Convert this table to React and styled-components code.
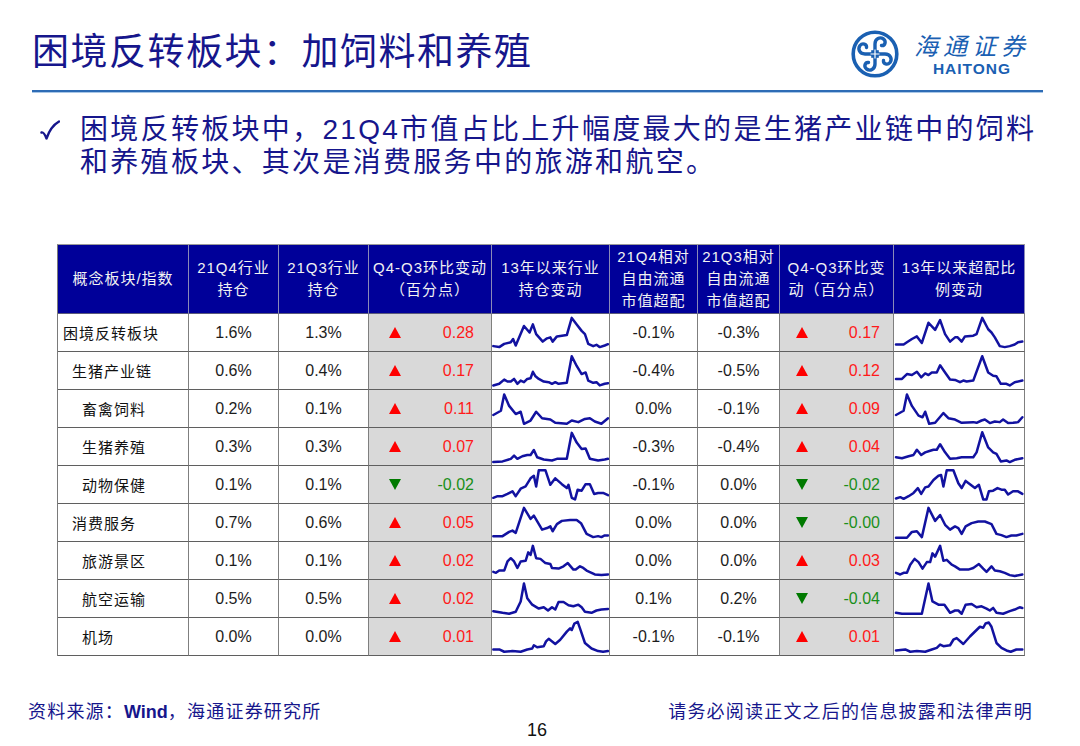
import React from 'react';
import styled, { createGlobalStyle } from 'styled-components';

const FONT = `"Liberation Sans", "Noto Sans CJK SC", sans-serif`;
const NAVY = '#16168c';
const LOGO_BLUE = '#1a60b2';

const GlobalStyle = createGlobalStyle`
  html, body { margin: 0; padding: 0; background: #fff; }
  body { font-family: ${FONT}; }
`;

const Page = styled.div`
  width: 1080px;
  height: 746px;
  overflow: hidden;
  display: flex;
  flex-direction: column;
  background: #fff;
`;

const TitleBar = styled.header`
  height: 90px;
  box-sizing: border-box;
  display: flex;
  justify-content: space-between;
  align-items: flex-start;
  padding: 0 50px 0 32px;
`;

const Title = styled.h1`
  margin: 31px 0 0;
  font-family: ${FONT};
  font-weight: 400;
  font-size: 37px;
  line-height: 44px;
  letter-spacing: 1.5px;
  color: ${NAVY};
  white-space: nowrap;
`;

const Logo = styled.div`
  margin-top: 30px;
  display: flex;
  align-items: flex-start;
  gap: 15px;
`;

const LogoMark = styled.svg`
  width: 48px;
  height: 48px;
  display: block;
`;

const LogoText = styled.div`
  display: flex;
  flex-direction: column;
  align-items: center;
  color: ${LOGO_BLUE};
`;

const LogoCn = styled.span`
  font-family: "Noto Sans CJK SC", sans-serif;
  font-size: 24px;
  line-height: 24px;
  letter-spacing: 5px;
  font-style: italic;
  margin-top: 3px;
`;

const LogoEn = styled.span`
  font-family: "Liberation Sans", sans-serif;
  font-weight: 700;
  font-size: 15.5px;
  line-height: 14px;
  letter-spacing: 1px;
  margin-top: 5px;
`;

const Rule = styled.div`
  margin: 0 37px 0 32px;
  height: 2px;
  background: #2e6cb5;
  box-shadow: 0 1px 0 #a9c7e7;
`;

const Bullet = styled.section`
  margin-top: 21px;
  padding-left: 40px;
  display: flex;
  gap: 20px;
  align-items: flex-start;
`;

const Check = styled.svg`
  width: 20px;
  height: 22px;
  margin-top: 7px;
  flex: none;
`;

const BulletText = styled.p`
  margin: 0;
  font-family: ${FONT};
  font-size: 28px;
  line-height: 33px;
  letter-spacing: 2.3px;
  color: ${NAVY};
`;

const Line = styled.span`
  display: block;
  white-space: nowrap;
`;

const Table = styled.div`
  margin: 65px 0 0 57px;
  width: 968px;
  box-sizing: border-box;
  display: grid;
  grid-template-columns: 131px 90px 90px 123px 118px 88px 82px 114px 131px;
  grid-template-rows: 69px repeat(9, 38px);
  border-top: 1px solid #9a9a9a;
  border-left: 1px solid #7a7a7a;
`;

const HeadCell = styled.div`
  box-sizing: border-box;
  background: #000099;
  color: #f2f2f2;
  border-right: 1px solid #8a8ab8;
  border-bottom: 1px solid #5a5a7a;
  display: flex;
  align-items: center;
  justify-content: center;
  text-align: center;
  white-space: pre-line;
  font-family: ${FONT};
  font-size: 15px;
  line-height: 22px;
  letter-spacing: 1px;
`;

const Cell = styled.div`
  box-sizing: border-box;
  border-right: 1px solid #7f7f7f;
  border-bottom: 1px solid #5f5f5f;
  background: ${(p) => (p.$shade ? '#d9d9d9' : '#fff')};
  display: flex;
  align-items: center;
  justify-content: center;
  font-family: ${FONT};
  font-size: 16px;
  color: #1c1c1c;
  white-space: nowrap;
`;

const LabelCell = styled(Cell)`
  justify-content: flex-start;
  padding-left: ${(p) => [5, 14, 24][p.$level]}px;
  font-size: 15px;
  letter-spacing: 1px;
  color: #111;
`;

const ChangeCell = styled(Cell)`
  justify-content: space-between;
  padding: 0 ${(p) => p.$pr}px 0 ${(p) => p.$pl}px;
  color: ${(p) => (p.$up ? '#ff1a1a' : '#1a8f1a')};
`;

const Tri = styled.span`
  width: 0;
  height: 0;
  border-left: 6px solid transparent;
  border-right: 6px solid transparent;
  ${(p) =>
    p.$up
      ? 'border-bottom: 11px solid #ff0000;'
      : 'border-top: 11px solid #007a00;'}
`;

const SparkCell = styled(Cell)`
  align-items: stretch;
  justify-content: stretch;
`;

const Spark = styled.svg`
  width: 100%;
  height: 100%;
  display: block;
`;

const Footer = styled.footer`
  margin-top: 44px;
  padding: 0 47px 0 28px;
  display: flex;
  justify-content: space-between;
  font-family: ${FONT};
  font-size: 18px;
  line-height: 24px;
  letter-spacing: 1.2px;
  color: ${NAVY};
`;

const FooterNote = styled.span`
  white-space: nowrap;
`;

const Strong = styled.b`
  font-weight: 700;
  letter-spacing: 0;
`;

const PageNumber = styled.div`
  margin-top: -4px;
  padding-right: 6px;
  text-align: center;
  font-family: "Liberation Sans", sans-serif;
  font-size: 18px;
  line-height: 20px;
  color: #111;
`;

const headers = [
  '概念板块/指数',
  '21Q4行业\n持仓',
  '21Q3行业\n持仓',
  'Q4-Q3环比变动\n（百分点）',
  '13年以来行业\n持仓变动',
  '21Q4相对\n自由流通\n市值超配',
  '21Q3相对\n自由流通\n市值超配',
  'Q4-Q3环比变\n动（百分点）',
  '13年以来超配比\n例变动',
];

const rows = [
  {
    name: '困境反转板块', level: 0, q4: '1.6%', q3: '1.3%', chg: '0.28', up: true,
    r4: '-0.1%', r3: '-0.3%', chg2: '0.17', up2: true,
    s1: '12,99 30,102 45,92 65,87 72,77 80,97 105,37 122,57 132,32 142,62 162,85 175,75 185,72 192,85 205,69 220,67 235,65 250,12 265,32 280,52 290,62 300,92 315,99 325,95 335,102 350,97 360,93',
    s2: '12,94 35,94 45,87 60,77 75,69 90,89 110,27 130,49 145,19 160,62 175,85 190,72 198,72 210,85 220,69 245,67 255,62 272,12 290,47 300,57 310,72 325,99 340,102 355,99 370,94 380,87 393,85',
  },
  {
    name: '生猪产业链', level: 1, q4: '0.6%', q3: '0.4%', chg: '0.17', up: true,
    r4: '-0.4%', r3: '-0.5%', chg2: '0.12', up2: true,
    s1: '12,103 30,98 45,85 55,91 65,91 75,83 85,98 95,88 105,93 115,83 125,81 132,61 140,75 150,83 165,91 180,93 190,98 200,93 210,98 235,95 250,13 265,43 280,68 292,63 300,88 315,95 325,93 335,103 350,98 360,96',
    s2: '12,83 30,83 45,68 60,71 75,61 88,78 100,66 110,71 120,63 135,63 145,41 160,63 175,85 190,86 205,93 215,88 225,91 245,88 272,13 290,63 305,73 315,75 328,98 345,98 355,103 370,93 393,88',
  },
  {
    name: '畜禽饲料', level: 2, q4: '0.2%', q3: '0.1%', chg: '0.11', up: true,
    r4: '0.0%', r3: '-0.1%', chg2: '0.09', up2: true,
    s1: '12,77 35,64 45,14 60,49 80,74 95,67 105,104 125,94 142,67 160,87 185,91 200,101 235,104 250,94 270,99 290,89 305,87 320,97 340,104 360,87',
    s2: '12,77 35,64 45,14 60,49 80,79 92,84 100,67 112,104 130,101 155,71 170,87 190,91 210,101 245,99 255,101 270,94 280,91 295,102 310,97 325,99 335,91 350,102 365,101 380,99 393,84',
  },
  {
    name: '生猪养殖', level: 2, q4: '0.3%', q3: '0.3%', chg: '0.07', up: true,
    r4: '-0.3%', r3: '-0.4%', chg2: '0.04', up2: true,
    s1: '12,105 40,103 65,95 75,85 85,95 100,87 115,83 125,83 135,68 145,90 165,97 190,100 205,95 235,95 250,15 265,45 280,65 292,63 305,95 330,100 350,97 360,95',
    s2: '12,90 30,93 50,87 65,83 75,67 88,83 100,75 115,70 125,67 135,67 145,50 160,75 175,95 195,93 210,90 245,90 255,75 272,13 290,60 305,75 315,80 328,103 345,100 355,105 370,98 393,93',
  },
  {
    name: '动物保健', level: 2, q4: '0.1%', q3: '0.1%', chg: '-0.02', up: false,
    r4: '-0.1%', r3: '0.0%', chg2: '-0.02', up2: false,
    s1: '12,98 25,93 40,93 55,86 70,78 80,93 95,70 110,63 125,38 135,30 142,63 150,13 170,13 185,58 200,38 220,56 235,68 240,58 250,98 260,103 268,73 280,76 292,56 305,56 318,86 330,83 345,83 360,90',
    s2: '12,100 25,96 35,101 50,93 65,83 78,68 88,86 100,66 110,63 125,43 140,30 148,28 155,63 165,13 185,13 200,53 210,68 222,46 235,56 250,68 262,58 275,103 285,103 292,78 305,76 318,68 330,73 340,73 350,88 365,78 380,78 393,86',
  },
  {
    name: '消费服务', level: 1, q4: '0.7%', q3: '0.6%', chg: '0.05', up: true,
    r4: '0.0%', r3: '0.0%', chg2: '-0.00', up2: false,
    s1: '12,99 40,99 60,86 70,82 80,89 105,12 125,46 135,36 160,79 175,74 185,69 192,84 205,62 220,52 245,49 265,49 278,59 295,92 315,102 330,99 340,102 350,97 360,97',
    s2: '12,104 45,104 60,86 75,84 90,102 110,12 130,52 145,34 160,64 175,79 190,69 200,74 210,92 222,69 240,59 260,54 280,54 300,62 315,92 330,96 345,102 360,97 375,97 393,92',
  },
  {
    name: '旅游景区', level: 2, q4: '0.1%', q3: '0.1%', chg: '0.02', up: true,
    r4: '0.0%', r3: '0.0%', chg2: '0.03', up2: true,
    s1: '12,92 20,95 30,88 45,88 55,60 65,50 75,60 85,80 95,60 110,58 118,32 125,40 132,12 142,50 155,52 170,65 185,68 190,80 210,82 225,75 238,65 255,85 262,85 275,75 285,80 295,88 310,95 320,100 340,102 360,100',
    s2: '12,95 25,100 35,95 45,95 55,70 68,52 80,62 92,82 105,62 115,62 122,35 130,45 145,12 155,58 165,55 180,70 190,75 205,85 230,85 245,80 262,68 275,82 285,92 300,75 310,88 325,90 340,95 355,102 370,105 393,100',
  },
  {
    name: '航空运输', level: 2, q4: '0.5%', q3: '0.5%', chg: '0.02', up: true,
    r4: '0.1%', r3: '0.2%', chg2: '-0.04', up2: false,
    s1: '12,96 40,101 60,104 80,98 95,66 105,11 115,56 130,76 150,88 165,84 178,94 190,84 200,91 210,68 225,68 240,78 255,81 270,76 280,84 290,98 310,101 325,94 340,91 360,89',
    s2: '12,101 30,104 60,104 90,104 110,11 122,66 140,76 158,76 175,101 190,94 200,94 210,104 222,76 240,74 255,84 270,81 285,88 295,94 305,86 315,101 335,104 355,96 370,91 385,84 393,86',
  },
  {
    name: '机场', level: 2, q4: '0.0%', q3: '0.0%', chg: '0.01', up: true,
    r4: '-0.1%', r3: '-0.1%', chg2: '0.01', up2: true,
    s1: '12,97 30,97 45,104 70,102 95,104 115,97 130,94 135,84 145,90 165,87 172,72 180,64 200,80 215,67 235,42 245,32 250,37 258,17 268,12 275,32 290,77 310,94 330,102 345,104 360,102',
    s2: '12,100 40,97 55,104 75,102 100,104 120,97 135,92 145,82 155,87 175,84 185,67 195,62 215,80 235,57 255,37 265,27 275,30 282,17 292,14 300,27 315,77 330,92 345,100 358,104 375,97 393,97',
  },
];

function Sparkline({ points, viewBox }) {
  return (
    <Spark viewBox={viewBox} preserveAspectRatio="none">
      <polyline
        points={points}
        fill="none"
        stroke="#1212a0"
        strokeWidth="2.5"
        strokeLinejoin="round"
        strokeLinecap="round"
        vectorEffect="non-scaling-stroke"
      />
    </Spark>
  );
}

function HaitongMark() {
  const arm = 'M24 24 L24 14 C24 8.5 29 6.5 32.5 9 C35.5 11.5 34 16 30.5 15.5';
  return (
    <LogoMark viewBox="0 0 48 48">
      <circle cx="24" cy="24" r="21.8" fill="none" stroke={LOGO_BLUE} strokeWidth="3.6" />
      <g fill="none" stroke={LOGO_BLUE} strokeWidth="3.4" strokeLinecap="round">
        {[0, 90, 180, 270].map((r) => (
          <path key={r} d={arm} transform={`rotate(${r} 24 24)`} />
        ))}
      </g>
      <rect x="20.2" y="20.2" width="7.6" height="7.6" fill={LOGO_BLUE} />
      <path d="M24 19.5 V28.5 M19.5 24 H28.5" stroke="#fff" strokeWidth="1.2" />
    </LogoMark>
  );
}

export default function App() {
  return (
    <Page>
      <GlobalStyle />
      <TitleBar>
        <Title>困境反转板块：加饲料和养殖</Title>
        <Logo>
          <HaitongMark />
          <LogoText>
            <LogoCn>海通证券</LogoCn>
            <LogoEn>HAITONG</LogoEn>
          </LogoText>
        </Logo>
      </TitleBar>
      <Rule />
      <Bullet>
        <Check viewBox="0 0 20 22">
          <path
            d="M1.5 12.5 C3 12 4.5 13.5 6.5 18.5 C9 11 13 5 19 1.5"
            fill="none"
            stroke={NAVY}
            strokeWidth="2.4"
            strokeLinecap="round"
            strokeLinejoin="round"
          />
        </Check>
        <BulletText>
          <Line>困境反转板块中，21Q4市值占比上升幅度最大的是生猪产业链中的饲料</Line>
          <Line>和养殖板块、其次是消费服务中的旅游和航空。</Line>
        </BulletText>
      </Bullet>
      <Table>
        {headers.map((h) => (
          <HeadCell key={h}>{h}</HeadCell>
        ))}
        {rows.map((r) => (
          <React.Fragment key={r.name}>
            <LabelCell $level={r.level}>{r.name}</LabelCell>
            <Cell>{r.q4}</Cell>
            <Cell>{r.q3}</Cell>
            <ChangeCell $shade $up={r.up} $pl={20} $pr={17}>
              <Tri $up={r.up} />
              <span>{r.chg}</span>
            </ChangeCell>
            <SparkCell>
              <Sparkline points={r.s1} viewBox="8 0 355 114" />
            </SparkCell>
            <Cell>{r.r4}</Cell>
            <Cell>{r.r3}</Cell>
            <ChangeCell $shade $up={r.up2} $pl={16} $pr={13}>
              <Tri $up={r.up2} />
              <span>{r.chg2}</span>
            </ChangeCell>
            <SparkCell>
              <Sparkline points={r.s2} viewBox="6 0 392 114" />
            </SparkCell>
          </React.Fragment>
        ))}
      </Table>
      <Footer>
        <FooterNote>
          资料来源：<Strong>Wind</Strong>，海通证券研究所
        </FooterNote>
        <FooterNote>请务必阅读正文之后的信息披露和法律声明</FooterNote>
      </Footer>
      <PageNumber>16</PageNumber>
    </Page>
  );
}
